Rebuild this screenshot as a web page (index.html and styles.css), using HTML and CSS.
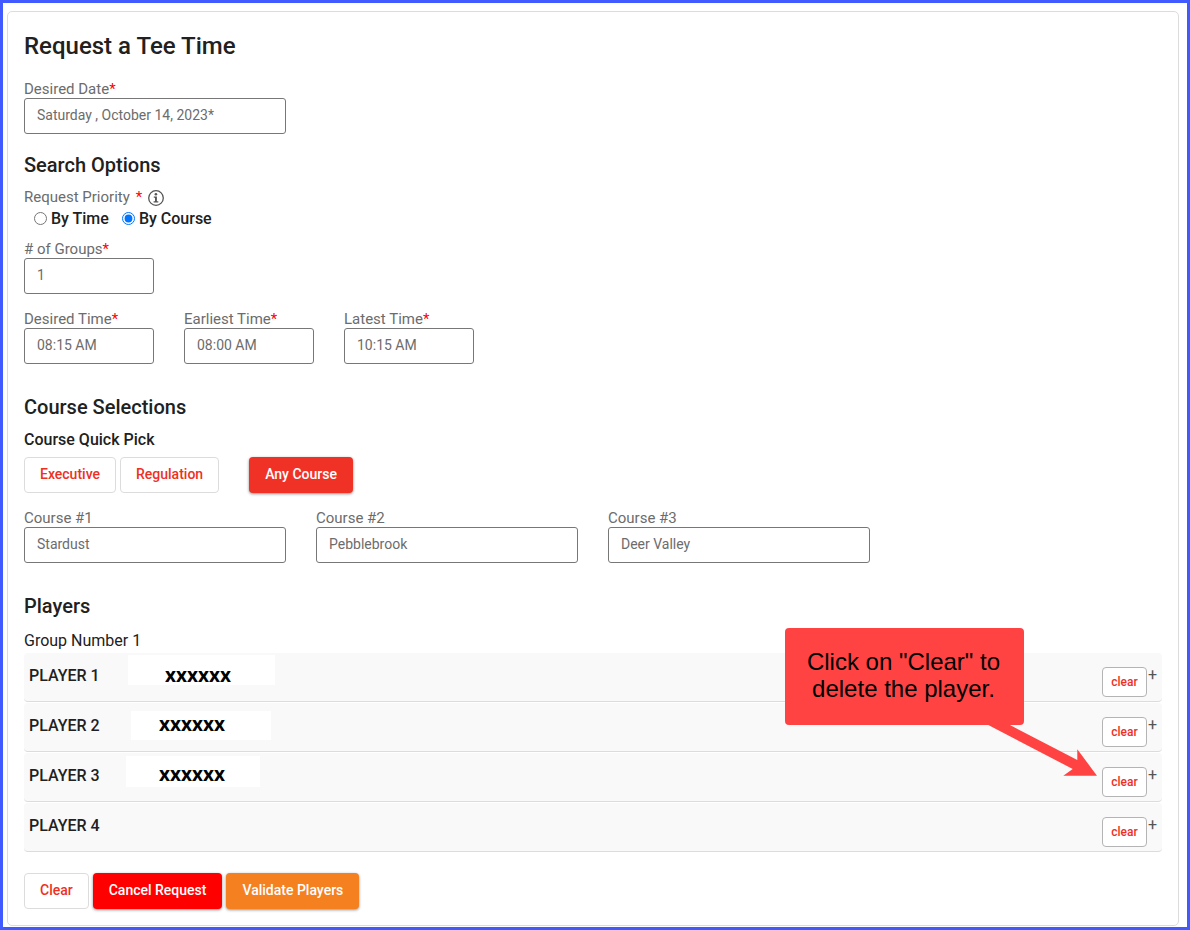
FILE: index.html
```
<!DOCTYPE html>
<html lang="en">
<head>
    <meta charset="UTF-8">
    <title>Request a Tee Time</title>
    <link rel="stylesheet" href="styles.css">
</head>
<body>
    <form class="card">
        <h1>Request a Tee Time</h1>
        <div class="field wide">
            <label for="date">Desired Date<span class="req">*</span></label>
            <input type="text" id="date" value="Saturday , October 14, 2023*">
        </div>

        <h2>Search Options</h2>
        <div class="priority" id="priority">
            Request Priority <span class="req">*</span>
            <svg class="info" viewBox="0 0 16 16" width="16" height="16">
                <circle cx="8" cy="8" r="7.3" fill="none" stroke="#555" stroke-width="1.3"/>
                <circle cx="7.9" cy="4.3" r="1.3" fill="#555"/>
                <path d="M5.8 6.6h3.1v4.6h1.4v1.2H5.6v-1.2H7V7.8H5.8z" fill="#555"/>
            </svg>
        </div>
        <div class="radios" role="radiogroup" aria-labelledby="priority">
            <label><input type="radio" name="priority">By Time</label>
            <label><input type="radio" name="priority" checked>By Course</label>
        </div>
        <div class="field">
            <label for="groups"># of Groups<span class="req">*</span></label>
            <input type="text" id="groups" value="1">
        </div>
        <div class="fields">
            <div class="field">
                <label for="desired">Desired Time<span class="req">*</span></label>
                <input type="text" id="desired" value="08:15 AM">
            </div>
            <div class="field">
                <label for="earliest">Earliest Time<span class="req">*</span></label>
                <input type="text" id="earliest" value="08:00 AM">
            </div>
            <div class="field">
                <label for="latest">Latest Time<span class="req">*</span></label>
                <input type="text" id="latest" value="10:15 AM">
            </div>
        </div>

        <h2 class="section">Course Selections</h2>
        <h3>Course Quick Pick</h3>
        <div class="buttons">
            <button type="button" class="btn">Executive</button>
            <button type="button" class="btn">Regulation</button>
            <button type="button" class="btn btn-any">Any Course</button>
        </div>
        <div class="fields">
            <div class="field wide">
                <label for="course1">Course #1</label>
                <input type="text" id="course1" value="Stardust">
            </div>
            <div class="field wide">
                <label for="course2">Course #2</label>
                <input type="text" id="course2" value="Pebblebrook">
            </div>
            <div class="field wide">
                <label for="course3">Course #3</label>
                <input type="text" id="course3" value="Deer Valley">
            </div>
        </div>

        <h2 class="section">Players</h2>
        <div class="group">Group Number 1</div>
        <div class="players">
            <div class="player">
                <span class="name">PLAYER 1</span>
                <span class="mask mask1">xxxxxx</span>
                <button type="button" class="clear">clear</button>
                <span class="plus">+</span>
            </div>
            <div class="player">
                <span class="name">PLAYER 2</span>
                <span class="mask mask2">xxxxxx</span>
                <button type="button" class="clear">clear</button>
                <span class="plus">+</span>
            </div>
            <div class="player">
                <span class="name">PLAYER 3</span>
                <span class="mask mask3">xxxxxx</span>
                <button type="button" class="clear">clear</button>
                <span class="plus">+</span>
            </div>
            <div class="player">
                <span class="name">PLAYER 4</span>
                <button type="button" class="clear">clear</button>
                <span class="plus">+</span>
            </div>
            <div class="callout">
                Click on "Clear" to<br>delete the player.
                <svg class="arrow" viewBox="0 0 112 53" width="112" height="53">
                    <path d="M1 0H23L92.3 36V25.3L112 51.7H78.3L87.7 45 3.3 1z" fill="#ff4343"/>
                </svg>
            </div>
        </div>

        <div class="buttons actions">
            <button type="button" class="btn">Clear</button>
            <button type="button" class="btn btn-cancel">Cancel Request</button>
            <button type="button" class="btn btn-validate">Validate Players</button>
        </div>
    </form>
</body>
</html>
```
FILE: styles.css
```
*{
    box-sizing: border-box;
}
body{
    margin: 0;
    min-height: 100vh;
    padding: 8px 8px 1px 4px;
    border: 3px solid #415aff;
    background: #fff;
    color: #212121;
    font: 16px/22px Roboto, sans-serif;
}
.card{
    padding: 18px 16px 16px;
    border: 1px solid #dcdcdc;
    border-radius: 5px;
}

h1, h2, h3{
    margin: 0;
    font-weight: 500;
}
h1{
    margin-bottom: 18px;
    font-size: 24px;
    line-height: 32px;
}
h2{
    margin: 19px 0 10px;
    font-size: 20px;
    line-height: 24px;
}
h2.section{
    margin-top: 31px;
}
h3{
    margin-bottom: 6px;
    font-size: 16px;
    line-height: 22px;
}
.req{
    color: #f00;
}

/* fields */
.fields{
    display: flex;
    flex-wrap: wrap;
    gap: 16px 30px;
    margin-top: 16px;
}
.field{
    width: 130px;
}
.wide{
    width: 262px;
}
.field label{
    display: block;
    color: #6c6c6c;
    font-size: 15px;
    line-height: 18px;
}
.field input{
    display: block;
    width: 100%;
    height: 36px;
    padding: 0 12px 2px;
    border: 1px solid #777;
    border-radius: 3px;
    background: #fff;
    color: #6c6c6c;
    font: 14px Roboto, sans-serif;
}
.priority{
    display: flex;
    align-items: center;
    gap: 6px;
    color: #6c6c6c;
    font-size: 15px;
    line-height: 20px;
}
.info{
    margin-top: 2px;
}
.radios{
    display: flex;
    gap: 13px;
    margin: 1px 0 10px 10px;
    font-weight: 500;
}
.radios label{
    display: flex;
    align-items: flex-start;
    gap: 4px;
}
.radios input{
    width: 13px;
    height: 13px;
    margin: 4px 0 0;
}

/* buttons */
.buttons{
    display: flex;
    gap: 4px;
}
.btn{
    height: 36px;
    padding: 0 15px 2px;
    border: 1px solid #dcdcdc;
    border-radius: 4px;
    background: #fff;
    color: #ee3024;
    font: 500 14px Roboto, sans-serif;
}
.btn-any, .btn-cancel, .btn-validate{
    border: 0;
    padding: 0 16px 2px;
    color: #fff;
    box-shadow: 0 1px 3px rgba(0,0,0,.45);
}
.btn-any{
    margin-left: 26px;
    background: #f03226;
}
.btn-cancel{
    background: #f00;
}
.btn-validate{
    background: #f58020;
}
.actions{
    margin-top: 21px;
}

/* players */
.group{
    margin: 12px 0 1px;
}
.players{
    position: relative;
    display: grid;
    gap: 1px;
}
.player{
    position: relative;
    display: flex;
    align-items: flex-start;
    height: 49px;
    padding: 12px 5px 0;
    border-bottom: 1px solid #dcdcdc;
    border-radius: 4px;
    background: #f9f9f9;
}
.name{
    font-weight: 500;
}
.clear{
    width: 45px;
    height: 30px;
    margin: 2px 1px 0 auto;
    padding: 0;
    border: 1px solid #b4b4b4;
    border-radius: 4px;
    background: #fff;
    color: #ee3024;
    font: 500 12px Roboto, sans-serif;
}
.plus{
    color: #555;
    line-height: 20px;
}
.mask{
    position: absolute;
    background: #fff;
    color: #000;
    font: bold 19px/24px "Open Sans", sans-serif;
}
.mask1{
    top: 2px;
    left: 104px;
    width: 147px;
    height: 30px;
    padding: 8px 0 0 37px;
}
.mask2{
    top: 8px;
    left: 107px;
    width: 140px;
    height: 29px;
    padding: 1px 0 0 28px;
}
.mask3{
    top: 3px;
    left: 102px;
    width: 134px;
    height: 31px;
    padding: 6px 0 0 33px;
}
.callout{
    position: absolute;
    top: -25px;
    right: 138px;
    width: 239px;
    padding: 20px 2px 23px 0;
    border-radius: 4px;
    background: #ff4343;
    color: #000;
    font: 24px/27px "Liberation Sans", Arial, sans-serif;
    text-align: center;
}
.arrow{
    position: absolute;
    top: 96px;
    left: 200px;
}
```
